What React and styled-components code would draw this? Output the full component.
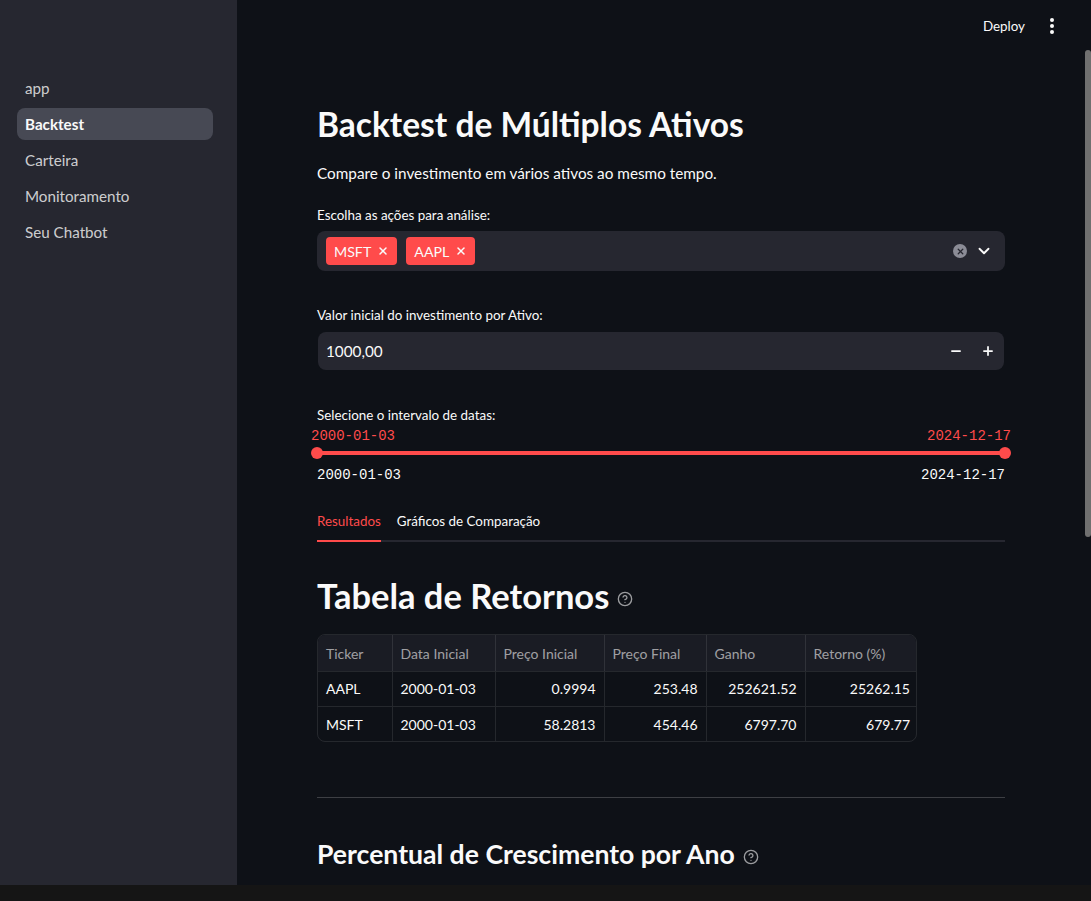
import React from 'react';
import styled, { createGlobalStyle } from 'styled-components';
import { ChevronDown, Minus, Plus, X, CircleHelp } from 'lucide-react';

const GlobalStyle = createGlobalStyle`
  html, body {
    margin: 0;
    padding: 0;
    background-color: #151515;
    overflow: hidden;
  }
  * {
    box-sizing: border-box;
  }
`;

const font = `'Source Sans Pro', Lato, 'Noto Sans', sans-serif`;
const mono = `'Liberation Mono', 'DejaVu Sans Mono', monospace`;

const AppShell = styled.div`
  display: flex;
  width: 1091px;
  height: 885px;
  overflow: hidden;
  font-family: ${font};
  color: #fafafa;
`;

const Sidebar = styled.nav`
  width: 237px;
  flex-shrink: 0;
  background-color: #262730;
  padding: 71.5px 24px 0 17px;
  display: flex;
  flex-direction: column;
  gap: 4px;
`;

const NavItem = styled.div`
  height: 32px;
  display: flex;
  align-items: center;
  padding-left: 8px;
  border-radius: 8px;
  font-size: 15.2px;
  font-weight: ${(p) => (p.$active ? 700 : 400)};
  color: ${(p) => (p.$active ? '#fafafa' : 'rgba(250, 250, 250, 0.8)')};
  background-color: ${(p) => (p.$active ? '#474954' : 'transparent')};
`;

const Main = styled.main`
  flex: 1;
  position: relative;
  background-color: #0e1117;
`;

const Header = styled.header`
  height: 52px;
  display: flex;
  justify-content: flex-end;
  align-items: center;
  padding-right: 37px;
  gap: 25px;
`;

const DeployButton = styled.span`
  font-size: 13.4px;
  color: #fafafa;
`;

const Dots = styled.div`
  display: flex;
  flex-direction: column;
  gap: 2px;
  > span {
    width: 4px;
    height: 4px;
    border-radius: 50%;
    background-color: #fafafa;
  }
`;

const ScrollThumb = styled.div`
  position: absolute;
  right: 0;
  top: 50px;
  width: 6px;
  height: 487px;
  border-radius: 3px;
  background-color: #707070;
`;

const Content = styled.div`
  width: 688px;
  margin-left: 80px;
  padding-top: 53px;
`;

const Title = styled.h1`
  margin: 0;
  font-size: 33.5px;
  font-weight: 700;
  line-height: 38px;
`;

const Paragraph = styled.p`
  margin: 18px 0 0;
  font-size: 15.3px;
  line-height: 24px;
`;

const Label = styled.div`
  margin-top: ${(p) => p.$top}px;
  font-size: 13.4px;
  line-height: 20px;
`;

const SelectBox = styled.div`
  margin-top: 6px;
  height: 40px;
  background-color: #262730;
  border-radius: 8px;
  display: flex;
  align-items: center;
  padding: 0 12px 0 9px;
  gap: 9px;
`;

const Tag = styled.span`
  height: 28px;
  display: flex;
  align-items: center;
  gap: 6px;
  padding: 0 8px;
  border-radius: 4px;
  background-color: #ff4b4b;
  font-size: 14.2px;
  color: #fafafa;
`;

const Spacer = styled.div`
  flex: 1;
`;

const ClearIcon = styled.span`
  width: 14px;
  height: 14px;
  border-radius: 50%;
  background-color: #8b8c96;
  display: flex;
  align-items: center;
  justify-content: center;
  margin-right: -1px;
`;

const NumberBox = styled.div`
  margin: 7px 1px 0;
  height: 38px;
  background-color: #262730;
  border-radius: 8px;
  display: flex;
  align-items: center;
  padding-left: 8px;
  font-size: 15.3px;
`;

const StepButton = styled.span`
  width: 32px;
  height: 38px;
  display: flex;
  align-items: center;
  justify-content: center;
`;

const Slider = styled.div`
  position: relative;
  margin-top: 1px;
  height: 70px;
`;

const ThumbValue = styled.span`
  position: absolute;
  top: 0;
  font-family: ${mono};
  font-size: 14px;
  line-height: 20px;
  color: #ff4b4b;
  ${(p) => (p.$right ? 'right: -6px;' : 'left: -6px;')}
`;

const Track = styled.div`
  position: absolute;
  top: 25px;
  left: 0;
  right: 0;
  height: 4px;
  background-color: #ff4b4b;
  border-radius: 2px;
`;

const Thumb = styled.span`
  position: absolute;
  top: -4px;
  width: 12px;
  height: 12px;
  border-radius: 50%;
  background-color: #ff4b4b;
  ${(p) => (p.$right ? 'right: -6px;' : 'left: -6px;')}
`;

const TickRow = styled.div`
  position: absolute;
  top: 39px;
  left: 0;
  right: 0;
  display: flex;
  justify-content: space-between;
  font-family: ${mono};
  font-size: 14px;
  line-height: 20px;
`;

const TabList = styled.div`
  margin-top: 15px;
  display: flex;
  gap: 16px;
  border-bottom: 2px solid #262730;
`;

const Tab = styled.div`
  font-size: 13.4px;
  line-height: 20px;
  padding-bottom: 9px;
  margin-bottom: -2px;
  color: ${(p) => (p.$active ? '#ff4b4b' : '#fafafa')};
  border-bottom: 2px solid ${(p) => (p.$active ? '#ff4b4b' : 'transparent')};
`;

const Heading = styled.h2`
  margin: ${(p) => p.$top}px 0 0;
  font-size: ${(p) => p.$size}px;
  font-weight: 700;
  line-height: 1.2;
  display: flex;
  align-items: center;
  gap: 8px;
  > svg {
    margin-top: ${(p) => p.$iconTop}px;
  }
`;

const TableWrap = styled.div`
  margin-top: 18px;
  width: 600px;
  border: 1px solid rgba(250, 250, 250, 0.1);
  border-radius: 8px;
  overflow: hidden;
`;

const Table = styled.table`
  width: 100%;
  border-collapse: collapse;
  font-size: 14px;
  table-layout: fixed;
`;

const Th = styled.th`
  height: 36px;
  padding: 0 8px;
  text-align: left;
  font-weight: 400;
  color: rgba(250, 250, 250, 0.6);
  background-color: #1a1c24;
  border-left: 1px solid rgba(250, 250, 250, 0.1);
  border-bottom: 1px solid rgba(250, 250, 250, 0.1);
  &:first-child {
    border-left: none;
  }
`;

const Td = styled.td`
  height: 35px;
  padding: 0 8px;
  text-align: ${(p) => (p.$num ? 'right' : 'left')};
  border-left: 1px solid rgba(250, 250, 250, 0.1);
  border-top: 1px solid rgba(250, 250, 250, 0.1);
  &:first-child {
    border-left: none;
  }
`;

const Divider = styled.hr`
  margin: 55px 0 0;
  border: none;
  border-top: 1px solid rgba(250, 250, 250, 0.2);
`;

const navItems = ['app', 'Backtest', 'Carteira', 'Monitoramento', 'Seu Chatbot'];

const columns = [
  { name: 'Ticker', width: 74 },
  { name: 'Data Inicial', width: 103 },
  { name: 'Preço Inicial', width: 109 },
  { name: 'Preço Final', width: 102 },
  { name: 'Ganho', width: 99 },
  { name: 'Retorno (%)', width: 113 },
];

const rows = [
  ['AAPL', '2000-01-03', '0.9994', '253.48', '252621.52', '25262.15'],
  ['MSFT', '2000-01-03', '58.2813', '454.46', '6797.70', '679.77'],
];

const App = () => {
  return (
    <>
      <GlobalStyle />
      <AppShell>
        <Sidebar>
          {navItems.map((item) => (
            <NavItem key={item} $active={item === 'Backtest'}>
              {item}
            </NavItem>
          ))}
        </Sidebar>
        <Main>
          <Header>
            <DeployButton>Deploy</DeployButton>
            <Dots>
              <span />
              <span />
              <span />
            </Dots>
          </Header>
          <ScrollThumb />
          <Content>
            <Title>Backtest de Múltiplos Ativos</Title>
            <Paragraph>Compare o investimento em vários ativos ao mesmo tempo.</Paragraph>

            <Label $top={20}>Escolha as ações para análise:</Label>
            <SelectBox>
              <Tag>
                MSFT <X size={12} strokeWidth={3} />
              </Tag>
              <Tag>
                AAPL <X size={12} strokeWidth={3} />
              </Tag>
              <Spacer />
              <ClearIcon>
                <X size={9} strokeWidth={3.5} color="#262730" />
              </ClearIcon>
              <ChevronDown size={18} strokeWidth={2.5} color="#fafafa" />
            </SelectBox>

            <Label $top={34}>Valor inicial do investimento por Ativo:</Label>
            <NumberBox>
              1000,00
              <Spacer />
              <StepButton>
                <Minus size={14} strokeWidth={3} />
              </StepButton>
              <StepButton>
                <Plus size={14} strokeWidth={3} />
              </StepButton>
            </NumberBox>

            <Label $top={35}>Selecione o intervalo de datas:</Label>
            <Slider>
              <ThumbValue>2000-01-03</ThumbValue>
              <ThumbValue $right>2024-12-17</ThumbValue>
              <Track>
                <Thumb />
                <Thumb $right />
              </Track>
              <TickRow>
                <span>2000-01-03</span>
                <span>2024-12-17</span>
              </TickRow>
            </Slider>

            <TabList>
              <Tab $active>Resultados</Tab>
              <Tab>Gráficos de Comparação</Tab>
            </TabList>

            <Heading $top={33} $size={34.5} $iconTop={6}>
              Tabela de Retornos
              <CircleHelp size={16} color="rgba(250,250,250,0.6)" />
            </Heading>

            <TableWrap>
              <Table>
                <colgroup>
                  {columns.map((c) => (
                    <col key={c.name} style={{ width: c.width }} />
                  ))}
                </colgroup>
                <thead>
                  <tr>
                    {columns.map((c) => (
                      <Th key={c.name}>{c.name}</Th>
                    ))}
                  </tr>
                </thead>
                <tbody>
                  {rows.map((r) => (
                    <tr key={r[0]}>
                      {r.map((v, i) => (
                        <Td key={i} $num={i > 1}>
                          {v}
                        </Td>
                      ))}
                    </tr>
                  ))}
                </tbody>
              </Table>
            </TableWrap>

            <Divider />

            <Heading $top={41} $size={26.6} $iconTop={4}>
              Percentual de Crescimento por Ano
              <CircleHelp size={16} color="rgba(250,250,250,0.6)" />
            </Heading>
          </Content>
        </Main>
      </AppShell>
    </>
  );
};

export default App;
